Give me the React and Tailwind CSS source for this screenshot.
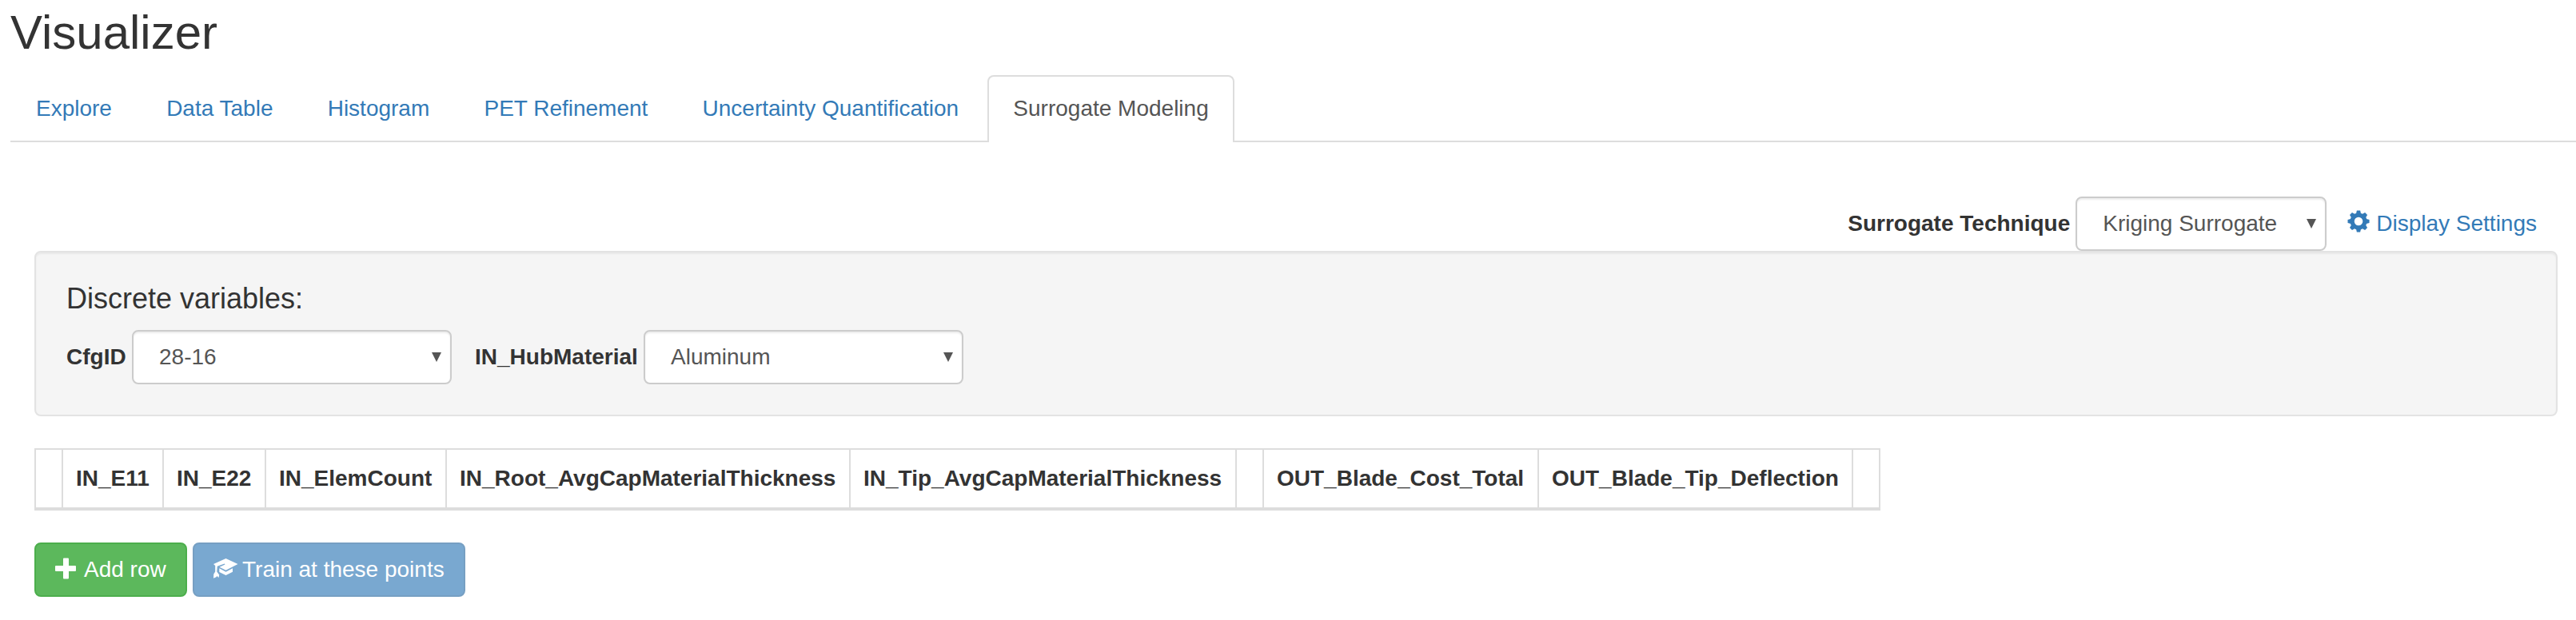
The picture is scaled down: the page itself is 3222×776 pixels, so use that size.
const TABS = ['Explore', 'Data Table', 'Histogram', 'PET Refinement', 'Uncertainty Quantification'];

const COLUMNS = [
  { label: '', width: 34 },
  { label: 'IN_E11', width: 126 },
  { label: 'IN_E22', width: 128 },
  { label: 'IN_ElemCount', width: 226 },
  { label: 'IN_Root_AvgCapMaterialThickness', width: 505 },
  { label: 'IN_Tip_AvgCapMaterialThickness', width: 483 },
  { label: '', width: 34 },
  { label: 'OUT_Blade_Cost_Total', width: 344 },
  { label: 'OUT_Blade_Tip_Deflection', width: 393 },
  { label: '', width: 34 },
];

function Select({ value, className }) {
  return (
    <div
      className={
        'flex h-[68px] shrink-0 items-center justify-between rounded-lg border-2 border-[#ccc] bg-white pr-[11px] pl-8 text-[#555] shadow-[inset_0_2px_2px_rgba(0,0,0,0.075)] ' +
        className
      }
    >
      <span>{value}</span>
      <svg className="h-3 w-3" viewBox="0 0 12 12" fill="#555">
        <path d="M0 0H12L6 12Z" />
      </svg>
    </div>
  );
}

function CogIcon() {
  return (
    <svg className="mr-2 mb-[7px] h-7 w-7 shrink-0" viewBox="-14 -14 28 28" fill="currentColor">
      <circle r="7.9" fill="none" stroke="currentColor" strokeWidth="5.2" />
      {[0, 45, 90, 135, 180, 225, 270, 315].map((a) => (
        <path key={a} d="M-3.2 -9L-2.1 -13.5H2.1L3.2 -9Z" transform={`rotate(${a})`} />
      ))}
    </svg>
  );
}

function PlusIcon() {
  return (
    <svg className="mr-2 mb-[3px] h-7 w-7 shrink-0" viewBox="0 0 28 28" fill="currentColor">
      <path d="M10 1.5Q10 .5 11 .5H16Q17 .5 17 1.5V10H25Q26 10 26 11V16Q26 17 25 17H17V25.500Q17 26.500 16 26.500H11Q10 26.500 10 25.500V17H1Q0 17 0 16V11Q0 10 1 10H10Z" />
    </svg>
  );
}

function GraduationIcon() {
  return (
    <svg className="mr-2 h-7 w-7 shrink-0 overflow-visible" viewBox="0 0 28 28" fill="currentColor">
      <path d="M15.500 0L30.500 7L15.500 14.700L7.500 10.700L14.500 7.600L13.800 6.600L4.800 9.800L4.300 16.500L7.200 20.500L6.500 24L4.400 22L3.400 23.200L0 24.700L.3 19.500L2.200 16.500V9L0 7Z" />
      <path d="M7.300 12.200L15.500 16.700L24 12.200V16.700L15.500 21L7.300 17Z" />
    </svg>
  );
}

export default function App() {
  return (
    <div className="h-[776px] w-full overflow-hidden bg-white pt-2 pl-[13px] font-['Liberation_Sans',Arial,sans-serif] text-[28px] leading-10 text-[#333]">
      <h2 className="text-[60px] leading-[66px]">Visualizer</h2>

      <ul className="mt-5 flex h-[84px] gap-[4.2px] border-b-2 border-[#ddd]">
        {TABS.map((tab) => (
          <li key={tab} className="px-8 pt-[22px] whitespace-nowrap text-[#337ab7]">
            {tab}
          </li>
        ))}
        <li className="h-[84px] rounded-t-lg border-2 border-b-0 border-[#ddd] bg-white px-[30px] pt-5 whitespace-nowrap text-[#555]">
          Surrogate Modeling
        </li>
      </ul>

      <div className="mt-[68px] mr-[23px] ml-[30px]">
        <div className="flex h-[68px] items-center justify-end pr-[26px] whitespace-nowrap">
          <span className="mr-[7px] font-bold">Surrogate Technique</span>
          <Select value="Kriging Surrogate" className="w-[314px]" />
          <span className="ml-[26px] flex items-center text-[#337ab7]">
            <CogIcon />
            Display Settings
          </span>
        </div>

        <div className="h-[207px] rounded-lg border-2 border-[#e3e3e3] bg-[#f5f5f5] p-[38px] shadow-[inset_0_2px_2px_rgba(0,0,0,0.05)]">
          <h4 className="mb-5 text-[36px] leading-[39px]">Discrete variables:</h4>
          <div className="flex items-center">
            <span className="w-[82px] font-bold">CfgID</span>
            <Select value="28-16" className="w-[400px]" />
            <span className="ml-[29px] w-[211px] font-bold">IN_HubMaterial</span>
            <Select value="Aluminum" className="w-[400px]" />
          </div>
        </div>

        <div className="mt-10 flex h-[78px] w-fit border-t-2 border-b-4 border-l-2 border-[#ddd]">
          {COLUMNS.map((col, i) => (
            <div
              key={i}
              className="border-r-2 border-[#ddd] pt-4 pl-4 font-bold whitespace-nowrap"
              style={{ width: col.width }}
            >
              {col.label}
            </div>
          ))}
        </div>

        <div className="mt-10 flex gap-[7px] whitespace-nowrap text-white">
          <button className="flex h-[68px] w-[191px] items-center rounded-lg border-2 border-[#4cae4c] bg-[#5cb85c] pl-6">
            <PlusIcon />
            Add row
          </button>
          <button className="flex h-[68px] w-[341px] items-center rounded-lg border-2 border-[#2e6da4] bg-[#337ab7] pl-6 opacity-65">
            <GraduationIcon />
            Train at these points
          </button>
        </div>
      </div>
    </div>
  );
}
